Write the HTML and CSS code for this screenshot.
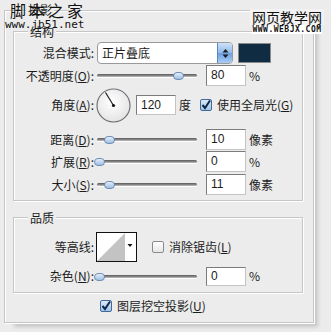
FILE: index.html
```html
<!DOCTYPE html>
<html lang="zh-CN">

<head>
    <meta charset="UTF-8">
    <title>投影</title>
    <link rel="stylesheet" href="styles.css">
</head>

<body>

    <div class="panel">
        <span class="panel-title">投影</span>

        <div class="group group-struct">
            <span class="group-title">结构</span>

            <div class="row row-blend">
                <span class="lbl">混合模式:</span>
                <div class="select">
                    <span class="select-text">正片叠底</span>
                    <span class="select-btn">
                        <svg width="7" height="11" viewBox="0 0 7 11">
                            <path d="M3.5 1 L6.5 4.5 L0.5 4.5 Z M3.5 10 L6.5 6.5 L0.5 6.5 Z" fill="#1b1b1b" />
                        </svg>
                    </span>
                </div>
                <span class="swatch"></span>
            </div>

            <div class="row row-opacity">
                <span class="lbl">不透明度(<u>O</u>):</span>
                <div class="slider"><span class="thumb" style="left:80px"></span></div>
                <span class="field">80</span>
                <span class="unit">%</span>
            </div>

            <div class="row row-angle">
                <span class="lbl">角度(<u>A</u>):</span>
                <svg class="dial" width="35" height="35" viewBox="0 0 35 35">
                    <defs>
                        <radialGradient id="dialbg" cx="45%" cy="40%" r="60%">
                            <stop offset="0" stop-color="#ffffff" />
                            <stop offset="1" stop-color="#e4e4e4" />
                        </radialGradient>
                    </defs>
                    <circle cx="17.5" cy="17.5" r="16.5" fill="url(#dialbg)" stroke="#6f7378" stroke-width="1.2" />
                    <line x1="17.5" y1="17.5" x2="9.5" y2="4.5" stroke="#111" stroke-width="1.1" />
                    <circle cx="17.5" cy="17.5" r="1.6" fill="#111" />
                </svg>
                <span class="field field-angle">120</span>
                <span class="unit">度</span>
                <span class="check checked">
                    <svg width="12" height="12" viewBox="0 0 12 12">
                        <path d="M2.5 6 L5 9 L10 1.5" fill="none" stroke="#10284a" stroke-width="2" />
                    </svg>
                </span>
                <span class="check-text">使用全局光(<u>G</u>)</span>
            </div>

            <div class="row row-dist">
                <span class="lbl">距离(<u>D</u>):</span>
                <div class="slider"><span class="thumb" style="left:11px"></span></div>
                <span class="field">10</span>
                <span class="unit">像素</span>
            </div>

            <div class="row row-spread">
                <span class="lbl">扩展(<u>R</u>):</span>
                <div class="slider"><span class="thumb" style="left:1px"></span></div>
                <span class="field">0</span>
                <span class="unit">%</span>
            </div>

            <div class="row row-size">
                <span class="lbl">大小(<u>S</u>):</span>
                <div class="slider"><span class="thumb" style="left:11px"></span></div>
                <span class="field">11</span>
                <span class="unit">像素</span>
            </div>
        </div>

        <div class="group group-quality">
            <span class="group-title">品质</span>

            <div class="row row-contour">
                <span class="lbl">等高线:</span>
                <svg class="contour" width="41" height="30" viewBox="0 0 41 30">
                    <rect x="0.5" y="0.5" width="40" height="29" fill="#fff" stroke="#111" />
                    <polygon points="1,29 29,1 29,29" fill="#c3c3c3" />
                    <path d="M31.5 12 L36.5 12 L34 15 Z" fill="#111" />
                </svg>
                <span class="check"></span>
                <span class="check-text">消除锯齿(<u>L</u>)</span>
            </div>

            <div class="row row-noise">
                <span class="lbl">杂色(<u>N</u>):</span>
                <div class="slider"><span class="thumb" style="left:1px"></span></div>
                <span class="field">0</span>
                <span class="unit">%</span>
            </div>
        </div>

        <div class="row row-knock">
            <span class="check checked">
                <svg width="12" height="12" viewBox="0 0 12 12">
                    <path d="M2.5 6 L5 9 L10 1.5" fill="none" stroke="#10284a" stroke-width="2" />
                </svg>
            </span>
            <span class="check-text">图层挖空投影(<u>U</u>)</span>
        </div>
    </div>

    <div class="mark mark-left">
        <span class="mark-cn">脚本之家</span>
        <span class="mark-url">www.jb51.net</span>
    </div>

    <div class="mark mark-right">
        <span class="mark-cn">网页教学网</span>
        <span class="mark-url">WWW.WEBJX.COM</span>
    </div>

</body>

</html>
```

FILE: styles.css
```css
body {
    margin: 0;
    background-color: #ececec;
    font-family: "Noto Sans CJK SC", "Liberation Sans", sans-serif;
    font-size: 12px;
    color: #1c1c1c;
    position: relative;
    width: 331px;
    height: 332px;
    overflow: hidden;
}

u {
    text-decoration: underline;
    text-underline-offset: 1px;
}

.panel {
    position: relative;
    box-sizing: border-box;
    width: 310px;
    height: 313px;
    margin: 10px 0 0 4px;
    border: 1px solid #c6c6c6;
    box-shadow: inset 1px 1px 0 #fff, 1px 1px 0 #fff, 7px 7px 4px -3px rgba(0, 0, 0, 0.16);
}

.panel-title {
    position: absolute;
    top: -9px;
    left: 21px;
    padding: 0 2px;
    background-color: #ececec;
    line-height: 16px;
}

.group {
    position: relative;
    box-sizing: border-box;
    width: 290px;
    margin-left: 8px;
    border: 1px solid #c6c6c6;
    box-shadow: inset 1px 1px 0 #fff, 1px 1px 0 #fff;
}

.group-struct {
    margin-top: 20px;
    height: 170px;
    padding-top: 10px;
}

.group-quality {
    margin-top: 16px;
    height: 76px;
    padding-top: 14px;
}

.group-title {
    position: absolute;
    top: -8px;
    left: 14px;
    padding: 0 2px;
    background-color: #ececec;
    line-height: 16px;
}

.row {
    display: flex;
    align-items: center;
    height: 21px;
}

.lbl {
    width: 80px;
    margin-right: 3px;
    text-align: right;
    white-space: nowrap;
    line-height: 14px;
}

.row-blend {
    height: 22px;
}

.row-opacity {
    margin-top: 1px;
}

.row-angle {
    height: 34px;
    margin-top: 2px;
}

.row-dist {
    margin-top: 7px;
}

.row-spread {
    margin-top: 1px;
}

.row-size {
    margin-top: 2px;
}

.row-contour {
    height: 30px;
}

.row-noise {
    height: 20px;
    margin-top: 4px;
}

.row-knock {
    height: 12px;
    margin: 7px 0 0 95px;
}

.select {
    display: flex;
    box-sizing: border-box;
    width: 136px;
    height: 22px;
    border: 1px solid #9a9a9a;
    border-radius: 4px;
    background-color: #fff;
    overflow: hidden;
}

.select-text {
    flex: 1;
    padding-left: 4px;
    line-height: 20px;
}

.select-btn {
    display: flex;
    align-items: center;
    justify-content: center;
    width: 14px;
    border-left: 1px solid #5b86bf;
    background: linear-gradient(#cfe2f8, #8fb8ea 50%, #6a9fe0 51%, #a9cdf5);
}

.swatch {
    box-sizing: border-box;
    width: 33px;
    height: 20px;
    margin-left: 5px;
    border: 1px solid #8a8a8a;
    background-color: #0f2c42;
}

.slider {
    position: relative;
    width: 100px;
    height: 21px;
}

.slider::before {
    content: "";
    position: absolute;
    left: 0;
    right: 0;
    top: 9px;
    height: 3px;
    border-radius: 2px;
    background: linear-gradient(#5a5a5a, #8c8c8c 60%, #c4c4c4);
    box-shadow: 0 1px 0 #fff;
}

.thumb {
    position: absolute;
    top: 7px;
    width: 9px;
    height: 6px;
    margin-left: -4px;
    border: 1px solid #6f8fb3;
    border-radius: 5px;
    background: linear-gradient(#e4eefa, #9ebfe3);
}

.field {
    box-sizing: border-box;
    width: 40px;
    height: 21px;
    margin-left: 9px;
    padding-left: 4px;
    border: 1px solid #7b7b7b;
    border-right-color: #c4c4c4;
    border-bottom-color: #c4c4c4;
    background-color: #fff;
    line-height: 19px;
    font-family: "Liberation Sans", sans-serif;
    font-size: 12px;
}

.row-noise .field {
    height: 19px;
    line-height: 17px;
}

.unit {
    margin-left: 3px;
    line-height: 14px;
}

.dial {
    margin-left: -1px;
}

.field-angle {
    height: 20px;
    margin-left: 5px;
    line-height: 18px;
}

.unit + .check {
    margin-left: 9px;
}

.check {
    display: flex;
    box-sizing: border-box;
    width: 12px;
    height: 12px;
    border: 1px solid #8b8b8b;
    border-radius: 2px;
    background: linear-gradient(#ffffff, #e6e6e6);
}

.check.checked {
    border-color: #3f6a9c;
    background: linear-gradient(#dbe8f6, #a6c4e6);
}

.check svg {
    margin: -1px;
}

.check-text {
    margin-left: 5px;
    line-height: 14px;
    white-space: nowrap;
}

.contour {
    margin-left: -1px;
}

.contour + .check {
    margin-left: 15px;
}

.mark {
    position: absolute;
    display: flex;
    flex-direction: column;
    color: #111;
    pointer-events: none;
}

.mark-left {
    top: 1px;
    left: 5px;
}

.mark-left .mark-cn {
    font-size: 16px;
    line-height: 18px;
    letter-spacing: 3px;
    padding-left: 5px;
}

.mark-left .mark-url {
    font-family: "DejaVu Sans Mono", monospace;
    font-size: 11px;
    line-height: 11px;
}

.mark-right {
    top: 9px;
    left: 250px;
    align-items: center;
}

.mark-right .mark-cn {
    font-size: 14px;
    line-height: 16px;
    padding: 0 2px;
    background-color: #f2f2f2;
}

.mark-right .mark-url {
    font-family: "DejaVu Sans Mono", monospace;
    font-size: 8px;
    font-weight: bold;
    line-height: 9px;
    letter-spacing: 0.5px;
    background-color: #fff;
}
```
